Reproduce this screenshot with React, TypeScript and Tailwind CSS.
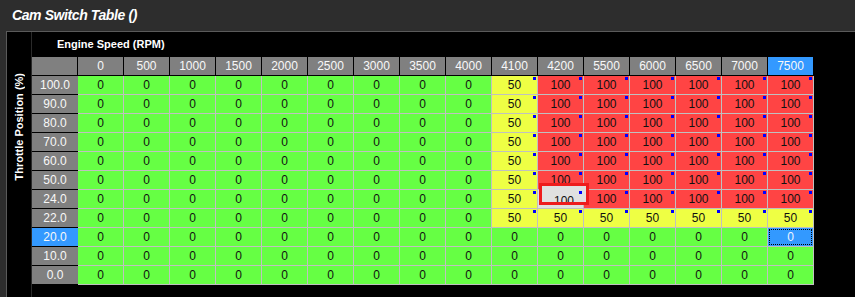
const RPM = [0, 500, 1000, 1500, 2000, 2500, 3000, 3500, 4000, 4100, 4200, 5500, 6000, 6500, 7000, 7500];
const TPS = ['100.0', '90.0', '80.0', '70.0', '60.0', '50.0', '24.0', '22.0', '20.0', '10.0', '0.0'];

function valueAt(r: number, c: number) {
  if (r <= 6) return c < 9 ? 0 : c === 9 ? 50 : 100;
  if (r === 7) return c < 9 ? 0 : 50;
  return 0;
}

const ACTIVE_ROW = 8;
const ACTIVE_COL = 15;
const EDIT_ROW = 6;
const EDIT_COL = 10;

function Cell({ r, c }: { r: number; c: number }) {
  const v = valueAt(r, c);
  const active = r === ACTIVE_ROW && c === ACTIVE_COL;
  const editing = r === EDIT_ROW && c === EDIT_COL;
  let bg = v === 100 ? 'bg-[#ff4444]' : v === 50 ? 'bg-[#eeff44]' : 'bg-[#66ff44]';
  if (editing) bg = 'bg-[#e0e0e0]';
  if (active) bg = 'bg-[#3399ff]';

  return (
    <div
      className={`relative flex items-center justify-center border-r border-b border-[#c0c0c0] ${bg} ${
        active ? 'text-[#eef4ff]' : 'text-[#111]'
      }`}
    >
      {active ? <div className="absolute inset-[1px] border border-dotted border-black" /> : null}
      {editing ? (
        // inline editor box, sits a bit above the cell
        <div className="absolute top-[-7px] left-[1px] z-10 w-[50px] h-[22px] border-[3px] border-[#ee1c1c] bg-[#e0e0e0] overflow-hidden">
          <div className="mt-[5px] h-[19px] flex items-center justify-center text-[#111]">{v}</div>
        </div>
      ) : (
        <span className="relative">{v}</span>
      )}
      {v > 0 ? <div className="absolute top-[1px] right-[1px] z-20 w-[3px] h-[3px] bg-[#0000ff]" /> : null}
    </div>
  );
}

export default function App() {
  return (
    <div className="w-[855px] h-[297px] bg-[#2d2d2d] overflow-hidden flex flex-col font-['Liberation_Sans',Arial,sans-serif]">
      {/* Title */}
      <div className="h-[31px] shrink-0 pl-[12px] flex items-center">
        <span className="text-white text-[14px] font-bold italic tracking-[-0.4px]">Cam Switch Table ()</span>
      </div>

      {/* Panel */}
      <div className="flex-1 ml-[6px] border-l border-t border-[#5a5a5a] bg-black flex">
        {/* Vertical axis label */}
        <div className="w-[24px] shrink-0 flex flex-col items-center pt-[41px]">
          <span className="[writing-mode:vertical-rl] rotate-180 text-white text-[11px] font-bold leading-none whitespace-nowrap">
            Throttle Position (%)
          </span>
        </div>

        <div className="flex flex-col border-l border-[#2a2a2a]">
          <div className="h-[25px] pl-[25px] flex items-center">
            <span className="text-white text-[11px] font-bold">Engine Speed (RPM)</span>
          </div>

          <div className="grid grid-cols-[repeat(17,46px)] auto-rows-[19px] text-[12px] leading-none">
            <div className="bg-[#808080] border-r border-b border-black" />
            {RPM.map((rpm, c) => (
              <div
                key={rpm}
                className={`flex items-center justify-center border-r border-b border-black text-[#f8f8f8] ${
                  c === ACTIVE_COL ? 'bg-[#3399ff]' : 'bg-[#808080]'
                }`}
              >
                {rpm}
              </div>
            ))}

            {TPS.map((tps, r) => (
              <>
                <div
                  key={`h${tps}`}
                  className={`flex items-center justify-center border-b border-black text-[#f8f8f8] ${
                    r === ACTIVE_ROW ? 'bg-[#3399ff]' : 'bg-[#808080]'
                  }`}
                >
                  {tps}
                </div>
                {RPM.map((rpm, c) => (
                  <Cell key={`${tps}-${rpm}`} r={r} c={c} />
                ))}
              </>
            ))}
          </div>
        </div>
      </div>
    </div>
  );
}
